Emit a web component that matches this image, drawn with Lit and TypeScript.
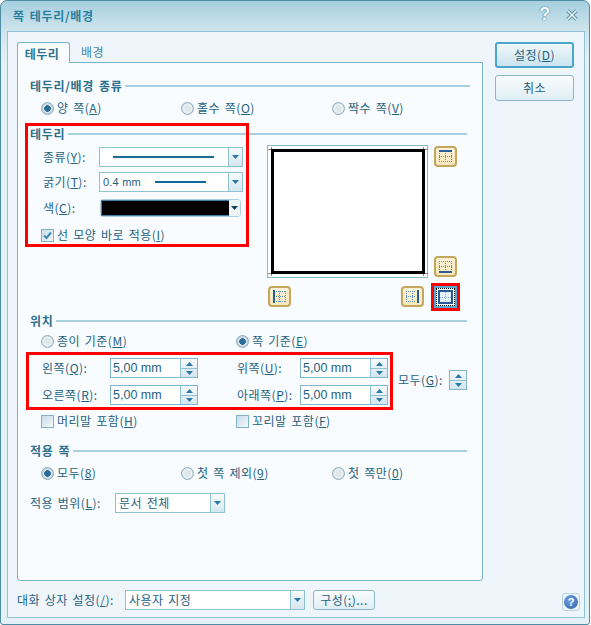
import { LitElement, html, css, svg, nothing } from "lit";
import { customElement } from "lit/decorators.js";

const arrowUp = html`<svg width="7" height="4" viewBox="0 0 7 4"><path d="M3.5 0 7 4H0z" fill="#2a7aa5"/></svg>`;
const arrowDown = html`<svg width="7" height="4" viewBox="0 0 7 4"><path d="M0 0h7L3.5 4z" fill="#2a7aa5"/></svg>`;
const arrowDark = html`<svg width="7" height="4" viewBox="0 0 7 4"><path d="M0 0h7L3.5 4z" fill="#123f58"/></svg>`;

function pageIcon(side: string) {
  const sets: Record<string, { d: string; bar: [number, number, number, number] }> = {
    top: { d: "M5 10.5h13M5 15.5h13M5.5 7v9M11.5 7v9M17.5 7v9", bar: [5, 4, 13, 2] },
    bottom: { d: "M5 5.5h13M5 10.5h13M5.5 5v9M11.5 5v9M17.5 5v9", bar: [5, 15, 13, 2] },
    left: { d: "M8 5.5h10M8 10.5h10M8 15.5h10M11.5 5v11M17.5 5v11", bar: [5, 4, 2, 13] },
    right: { d: "M5 5.5h10M5 10.5h10M5 15.5h10M5.5 5v11M11.5 5v11", bar: [16, 4, 2, 13] },
  };
  const s = sets[side];
  return html`<button class="pg"><svg width="23" height="21" viewBox="0 0 23 21">
    ${svg`<path d="${s.d}" stroke="#5b8fc6" stroke-dasharray="1 1" fill="none"/>
    <rect x="${s.bar[0]}" y="${s.bar[1]}" width="${s.bar[2]}" height="${s.bar[3]}" fill="#2a5f98"/>`}
  </svg></button>`;
}

@customElement("app-root")
export class AppRoot extends LitElement {
  static styles = css`
    :host {
      display: block;
      width: 591px;
      height: 625px;
      background: #fff;
      font-family: "Noto Sans CJK KR", "Noto Sans", sans-serif;
      font-size: 12px;
      line-height: 16px;
      letter-spacing: 0.5px;
      word-spacing: 1.5px;
      color: #1f6281;
      overflow: hidden;
    }
    * { box-sizing: border-box; }
    u { text-underline-offset: 1px; }
    .window {
      width: 590px;
      height: 625px;
      border: 1px solid #4d8ea5;
      border-radius: 7px 7px 3px 3px;
      background: linear-gradient(#a5cfde 0, #cfe5ee 30px, #e3f1f6 60px, #e3f1f6 100%);
      display: flex;
      flex-direction: column;
    }
    .title {
      height: 30px;
      flex: none;
      display: flex;
      align-items: center;
      padding: 0 11px 0 12px;
      font-weight: 700;
      letter-spacing: 0.7px;
      color: #2a7f9e;
    }
    .title .t { flex: 1; }
    .qm {
      font: 700 18px/16px "Liberation Sans", sans-serif;
      color: #f4fafc;
      text-shadow: 0 0 1px #4b8ba3, 0 0 1px #4b8ba3, 0 0 1px #4b8ba3;
      margin-right: 15px;
      position: relative;
      top: -2px;
    }
    .xbtn { display: block; margin-top: -2px; }
    .client {
      flex: none;
      margin: 0 4px 6px 6px;
      height: 587px;
      border: 1px solid #8fc3d5;
      background: #eff6fb;
      padding: 10px 3px 0 9px;
      display: flex;
      flex-direction: column;
    }
    .main { display: flex; height: 539px; flex: none; }
    .left { width: 465px; flex: none; }
    .side { margin-left: 13px; display: flex; flex-direction: column; gap: 7px; }
    .btn {
      font: inherit;
      letter-spacing: inherit;
      word-spacing: inherit;
      color: inherit;
      width: 79px;
      height: 26px;
      border: 1px solid #8db6c6;
      border-radius: 3px;
      background: linear-gradient(#f9fcfd, #dfeef4);
      padding: 0;
    }
    .btn.def {
      border: 2px solid #4ba6cb;
      background: linear-gradient(#f0f8fb, #cbe4ee);
    }
    .tabs { display: flex; height: 21px; position: relative; z-index: 1; }
    .tab {
      width: 53px;
      height: 21px;
      border: 1px solid #78b4c9;
      border-bottom: none;
      border-radius: 3px 3px 0 0;
      background: #f8fcfe;
      font-weight: 700;
      color: #2f7590;
      text-align: center;
      line-height: 22px;
      padding-right: 3px;
    }
    .tab.off {
      border: none;
      background: none;
      font-weight: 400;
      width: 47px;
      margin-left: -1px;
      padding-right: 0;
      color: #3f88a4;
      line-height: 20px;
    }
    .panel {
      width: 466px;
      height: 519px;
      margin-top: -1px;
      border: 1px solid #78b4c9;
      border-radius: 0 0 3px 3px;
      background: #f8fcfe;
      padding: 15px 15px 0 12px;
      position: relative;
    }
    .gt { display: flex; align-items: center; gap: 3px; height: 16px; font-weight: 700; letter-spacing: 0.7px; color: #2b6f8d; white-space: nowrap; }
    .gt i { flex: 1; height: 2px; background: #a9d0de; display: block; }
    .gt.wide { margin-right: -3px; }
    .gt.t2 { margin-top: 10px; }
    .gt.t3 { margin-top: 14px; }
    .radios { display: grid; height: 16px; margin-top: 6px; padding-left: 11px; align-items: center; }
    .radios.pos { margin-top: 4px; }
    .radios.flat { margin-top: 0; }
    .r3 { grid-template-columns: 140px 151px 1fr; }
    .r2 { grid-template-columns: 195px 1fr; }
    .opt { display: flex; align-items: center; gap: 3px; white-space: nowrap; }
    .rd {
      width: 13px; height: 13px; flex: none; border-radius: 50%;
      border: 1px solid #8caec2;
      background: radial-gradient(circle, #dfe7ea 0 3px, #eef3f5 4px, #c9d6dc 6px);
    }
    .rd.on { background: radial-gradient(circle, #2a6b98 0 3px, #dbe6ec 3.6px, #b5c8d3 6px); }
    .cb {
      width: 13px; height: 13px; flex: none;
      border: 1px solid #7fb4c8;
      background: linear-gradient(135deg, #c8dce8, #f4f9fb);
      display: flex; align-items: center; justify-content: center;
    }
    .sec1 { display: flex; height: 171px; }
    .col { width: 237px; flex: none; padding-top: 5px; display: flex; flex-direction: column; }
    .frow { display: flex; align-items: center; padding-left: 13px; height: 20px; }
    .frow .lb { width: 56px; flex: none; white-space: nowrap; }
    .combo {
      display: flex;
      height: 20px;
      border: 1px solid #8fc1d3;
      background: #fff;
      align-items: center;
      flex: none;
    }
    .combo .v { flex: 1; display: flex; align-items: center; padding-left: 3px; height: 100%; white-space: nowrap; min-width: 0; }
    .combo .dd {
      width: 14px; height: 100%; flex: none;
      border-left: 1px solid #8fc1d3;
      background: linear-gradient(#f6fafc, #d4e6f0);
      display: flex; align-items: center; justify-content: center;
    }
    .w144 { width: 144px; }
    .lineA { width: 101px; height: 2px; margin-left: 10px; background: #1b6d98; box-shadow: 0 0 1px #7eb0c8; }
    .lineB { width: 51px; height: 2px; margin-left: 14px; background: #0a6a9a; }
    .thin { font-family: "Liberation Sans", sans-serif; font-size: 11px; letter-spacing: 0.2px; word-spacing: 0; }
    .gap5 { margin-top: 5px; }
    .gap6 { margin-top: 6px; }
    .color { margin-left: 1px; width: 141px; height: 18px; border-radius: 3px; border-color: #b0cfdc; }
    .color .v { padding: 0 0 0 1px; }
    .color .fill { width: 100%; height: 14px; background: #000; outline: 1px solid #3f7f9f; }
    .color .dd { width: 11px; border: none; background: #edf4f7; border-radius: 0 3px 3px 0; }
    .chk { margin: 9px 0 0 11px; height: 16px; }
    .prev { display: grid; grid-template-columns: 161px 6px 23px; grid-template-rows: 133px 8px 22px; padding-top: 3px; height: 168px; }
    .box { grid-column: 1; grid-row: 1; width: 161px; height: 133px; display: block; }
    .rtop { grid-column: 3; grid-row: 1; display: flex; flex-direction: column; justify-content: space-between; padding: 1px 0; }
    .rbot { grid-column: 1; grid-row: 3; display: flex; justify-content: space-between; padding: 0 4px 0 1px; }
    .pgall { grid-column: 3; grid-row: 3; }
    .pg {
      width: 23px; height: 21px; padding: 0; display: block;
      border: 2px solid #c4a65c;
      border-radius: 4px;
      background: linear-gradient(#fdf3d8, #f7e7bc);
    }
    .pg svg { display: block; margin: -2px; }
    .pgs { width: 23px; height: 22px; display: block; }
    .sgrid { display: grid; grid-template-columns: 207px 190px; row-gap: 7px; }
    .srow { display: flex; align-items: center; height: 20px; padding-left: 12px; }
    .srow .lb { width: 68px; flex: none; white-space: nowrap; }
    .srow.b { padding-left: 0; }
    .srow.b .lb { width: 63px; }
    .num { width: 88px; height: 20px; border: 1px solid #7fb8cc; background: #fff; display: flex; flex: none; line-height: 18px; }
    .num .v { flex: 1; padding-left: 2px; font-family: "Liberation Sans", sans-serif; font-size: 12.5px; letter-spacing: 0; word-spacing: 0; }
    .sp { width: 17px; flex: none; display: grid; grid-template-rows: 1fr 1fr; border-left: 1px solid #8fc1d3; background: linear-gradient(#f6fafc, #d4e6f0); }
    .sp span { display: flex; align-items: center; justify-content: center; }
    .sp span + span { border-top: 1px solid #8fc1d3; }
    .posw { position: relative; height: 64px; padding-top: 9px; }
    .all { position: absolute; left: 368px; top: 21px; display: flex; align-items: center; height: 20px; white-space: nowrap; }
    .all .lb { width: 51px; flex: none; }
    .all .sp { width: 18px; height: 20px; border: 1px solid #7fb8cc; }
    .range { display: flex; align-items: center; margin-top: 12px; height: 20px; }
    .range .lb { width: 85px; flex: none; white-space: nowrap; }
    .range .combo { width: 110px; }
    .foot { display: flex; align-items: center; height: 20px; margin-top: 9px; }
    .foot .lb { width: 108px; flex: none; white-space: nowrap; }
    .foot .combo { width: 180px; }
    .foot .btn { width: 62px; height: 20px; margin-left: 8px; line-height: 16px; }
    .help {
      width: 18px; height: 18px; margin-left: auto; margin-top: 4px; margin-right: 1px;
      border: 1px solid #b8d2de; border-radius: 3px;
      background: #eef6fa;
      display: flex; align-items: center; justify-content: center;
    }
    .help span {
      width: 14px; height: 14px; border-radius: 50%;
      background: radial-gradient(circle at 40% 35%, #6f9fdc, #2f62ad);
      color: #fff;
      font: 700 11px/14px "Liberation Sans", sans-serif;
      letter-spacing: 0;
      text-align: center;
    }
    .mark { position: absolute; border: 3px solid #f00; pointer-events: none; }
    .m1 { left: 7px; top: 60px; width: 224px; height: 124px; }
    .m2 { left: 413px; top: 220px; width: 29px; height: 28px; }
    .m3 { left: 8px; top: 289px; width: 367px; height: 58px; }
  `;

  private opt(label: unknown, on = false) {
    return html`<span class="opt"><span class="rd ${on ? "on" : ""}"></span><span>${label}</span></span>`;
  }
  private chk(label: unknown, on = false) {
    return html`<span class="opt"><span class="cb">${on
      ? html`<svg width="11" height="11" viewBox="0 0 11 11"><path d="M2 5.5 4.5 8 9 2.5" fill="none" stroke="#3d86b8" stroke-width="2"/></svg>`
      : nothing}</span><span>${label}</span></span>`;
  }
  private spin() {
    return html`<span class="sp"><span>${arrowUp}</span><span>${arrowDown}</span></span>`;
  }
  private num() {
    return html`<div class="num"><span class="v">5,00 mm</span>${this.spin()}</div>`;
  }

  render() {
    return html`
      <div class="window">
        <div class="title">
          <span class="t">쪽 테두리/배경</span>
          <span class="qm">?</span>
          <svg class="xbtn" width="12" height="12" viewBox="0 0 12 12"><path d="M1.5 1.5 10.5 10.5M10.5 1.5 1.5 10.5" stroke="#4b8ba3" stroke-width="3.4"/><path d="M1.5 1.5 10.5 10.5M10.5 1.5 1.5 10.5" stroke="#f4fafc" stroke-width="1.6"/></svg>
        </div>
        <div class="client">
          <div class="main">
            <div class="left">
              <div class="tabs"><div class="tab">테두리</div><div class="tab off">배경</div></div>
              <div class="panel">
                <div class="gt wide"><span>테두리/배경 종류</span><i></i></div>
                <div class="radios r3">
                  ${this.opt(html`양 쪽(<u>A</u>)`, true)}
                  ${this.opt(html`홀수 쪽(<u>O</u>)`)}
                  ${this.opt(html`짝수 쪽(<u>V</u>)`)}
                </div>
                <div class="gt t2"><span>테두리</span><i></i></div>
                <div class="sec1">
                  <div class="col">
                    <div class="frow"><span class="lb">종류(<u>Y</u>):</span>
                      <div class="combo w144"><span class="v"><span class="lineA"></span></span><span class="dd">${arrowDown}</span></div></div>
                    <div class="frow gap5"><span class="lb">굵기(<u>T</u>):</span>
                      <div class="combo w144"><span class="v"><span class="thin">0.4 mm</span><span class="lineB"></span></span><span class="dd">${arrowDown}</span></div></div>
                    <div class="frow gap6"><span class="lb">색(<u>C</u>):</span>
                      <div class="combo color"><span class="v"><span class="fill"></span></span><span class="dd">${arrowDark}</span></div></div>
                    <div class="chk">${this.chk(html`선 모양 바로 적용(<u>I</u>)`, true)}</div>
                  </div>
                  <div class="prev">
                    <svg class="box" viewBox="0 0 161 133">
                      <rect x="0.5" y="0.5" width="160" height="132" fill="#fff" stroke="#87b8cb"/>
                      <path d="M4.5 2v10M156.5 2v10M4.5 121v10M156.5 121v10M1 4.5h10M151 4.5h10M1 128.5h10M151 128.5h10" stroke="#888"/>
                      <rect x="5.5" y="5.5" width="151" height="122" fill="#fff" stroke="#000" stroke-width="3"/>
                    </svg>
                    <div class="rtop">${pageIcon("top")}${pageIcon("bottom")}</div>
                    <div class="rbot">${pageIcon("left")}${pageIcon("right")}</div>
                    <svg class="pgall pgs" viewBox="0 0 23 22">
                      <rect x="1" y="1" width="21" height="20" fill="#f8fcfe" stroke="#5aa8d0" stroke-width="2"/>
                      <path d="M2 2.5h19M2 19.5h19M2.5 3v16M20.5 3v16" stroke="#000" stroke-dasharray="1 1" fill="none"/>
                      <rect x="5" y="5" width="13" height="12" fill="#e4f0f8" stroke="#265a96" stroke-width="2"/>
                      <path d="M11.5 6v10M6 11.5h11" stroke="#8cb4d8" stroke-dasharray="1 1"/>
                    </svg>
                  </div>
                </div>
                <div class="gt"><span>위치</span><i></i></div>
                <div class="radios r2 pos">
                  ${this.opt(html`종이 기준(<u>M</u>)`)}
                  ${this.opt(html`쪽 기준(<u>E</u>)`, true)}
                </div>
                <div class="posw">
                  <div class="sgrid">
                    <div class="srow"><span class="lb">왼쪽(<u>Q</u>):</span>${this.num()}</div>
                    <div class="srow b"><span class="lb">위쪽(<u>U</u>):</span>${this.num()}</div>
                    <div class="srow"><span class="lb">오른쪽(<u>R</u>):</span>${this.num()}</div>
                    <div class="srow b"><span class="lb">아래쪽(<u>P</u>):</span>${this.num()}</div>
                  </div>
                  <div class="all"><span class="lb">모두(<u>G</u>):</span>${this.spin()}</div>
                </div>
                <div class="radios r2 flat">
                  ${this.chk(html`머리말 포함(<u>H</u>)`)}
                  ${this.chk(html`꼬리말 포함(<u>F</u>)`)}
                </div>
                <div class="gt t3"><span>적용 쪽</span><i></i></div>
                <div class="radios r3">
                  ${this.opt(html`모두(<u>8</u>)`, true)}
                  ${this.opt(html`첫 쪽 제외(<u>9</u>)`)}
                  ${this.opt(html`첫 쪽만(<u>0</u>)`)}
                </div>
                <div class="range"><span class="lb">적용 범위(<u>L</u>):</span>
                  <div class="combo"><span class="v">문서 전체</span><span class="dd">${arrowDown}</span></div></div>
                <div class="mark m1"></div>
                <div class="mark m2"></div>
                <div class="mark m3"></div>
              </div>
            </div>
            <div class="side">
              <button class="btn def">설정(<u>D</u>)</button>
              <button class="btn">취소</button>
            </div>
          </div>
          <div class="foot">
            <span class="lb">대화 상자 설정(<u>/</u>):</span>
            <div class="combo"><span class="v">사용자 지정</span><span class="dd">${arrowDown}</span></div>
            <button class="btn">구성(<u>;</u>)...</button>
            <div class="help"><span>?</span></div>
          </div>
        </div>
      </div>
    `;
  }
}
